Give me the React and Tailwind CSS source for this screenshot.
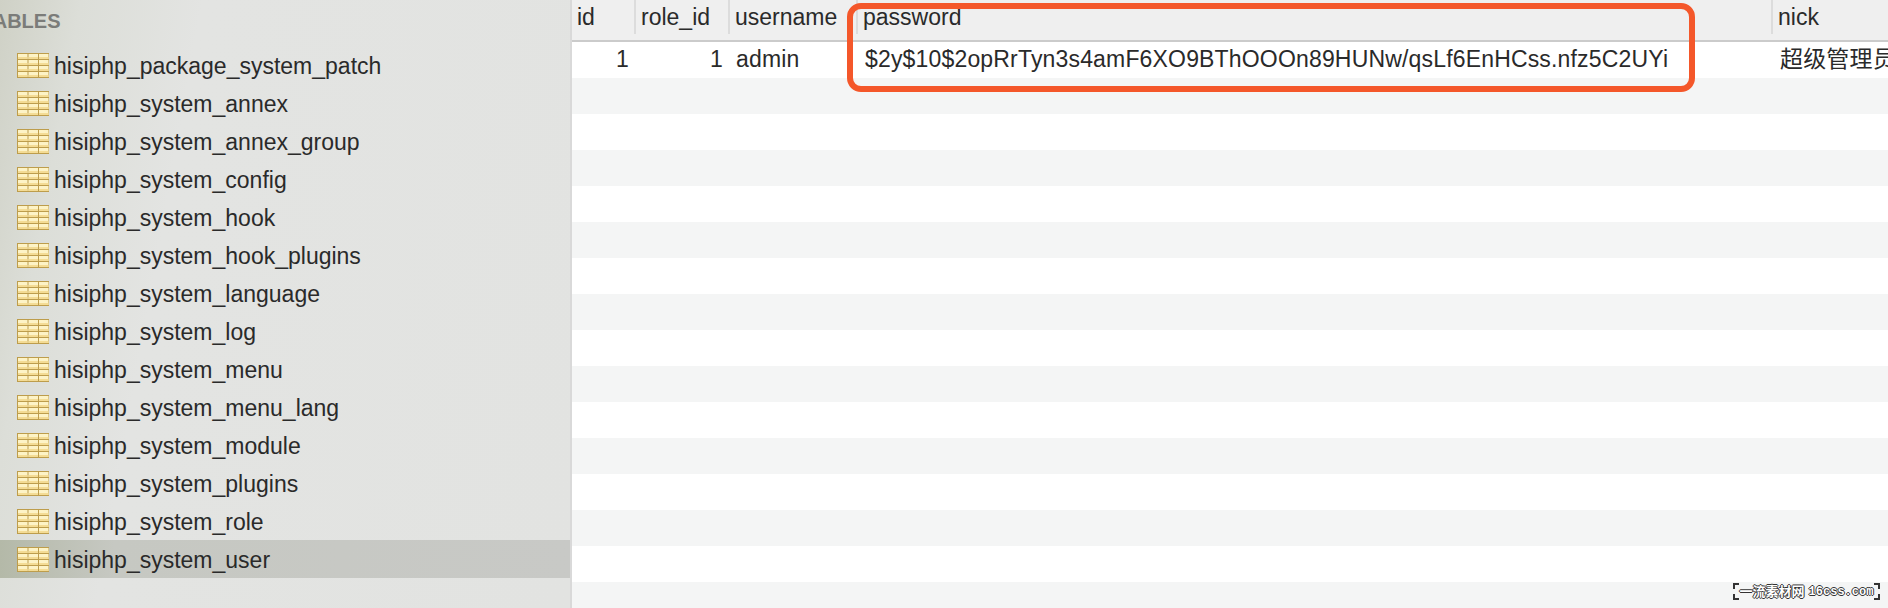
const tables = [
  'hisiphp_package_system_patch',
  'hisiphp_system_annex',
  'hisiphp_system_annex_group',
  'hisiphp_system_config',
  'hisiphp_system_hook',
  'hisiphp_system_hook_plugins',
  'hisiphp_system_language',
  'hisiphp_system_log',
  'hisiphp_system_menu',
  'hisiphp_system_menu_lang',
  'hisiphp_system_module',
  'hisiphp_system_plugins',
  'hisiphp_system_role',
  'hisiphp_system_user',
];

const columns = [
  { name: 'id', width: 'w-[64px]' },
  { name: 'role_id', width: 'w-[94px]' },
  { name: 'username', width: 'w-[128px]' },
  { name: 'password', width: 'w-[915px]' },
  { name: 'nick', width: 'flex-1' },
];

// Sequel Pro style yellow table icon: four bands, three columns
function TableIcon() {
  const bands = [1, 7, 13, 19];
  return (
    <svg width="32" height="25" viewBox="0 0 32 25" className="shrink-0">
      <rect x="0" y="0" width="32" height="25" fill="#bd9d4c" />
      {bands.map(y => (
        <g key={y}>
          {[1, 11.5, 22].map(x => (
            <g key={x}>
              <rect x={x} y={y} width="9.5" height="5" fill="#fdf3c6" />
              <rect x={x} y={y + 3} width="9.5" height="2" fill="#f4dc95" />
            </g>
          ))}
        </g>
      ))}
    </svg>
  );
}

export default function App() {
  return (
    <div className="relative flex h-[608px] w-[1888px] overflow-hidden bg-white font-['Liberation_Sans','Noto_Sans_CJK_SC',sans-serif] text-[#2a2a2a]">
      {/* Sidebar */}
      <div className="w-[570px] shrink-0 bg-[linear-gradient(100deg,#cfd1c6_0%,#dcded8_12%,#e3e4e2_30%,#e2e3e1_100%)]">
        <div className="h-[46px] overflow-hidden pt-[8px]">
          <div className="ml-[-18px] text-[20px] font-bold leading-[26px] text-[#7b7c79]">TABLES</div>
        </div>
        {tables.map(name => (
          <div
            key={name}
            className={`flex h-[38px] items-center gap-[5px] pl-[17px] text-[23px] ${
              name === 'hisiphp_system_user' ? 'bg-[linear-gradient(90deg,#b4b9a8_0%,#c6c8c2_20%,#c8c9c6_100%)]' : ''
            }`}
          >
            <TableIcon />
            <span className="pt-[2px]">{name}</span>
          </div>
        ))}
      </div>
      <div className="w-[2px] shrink-0 bg-[#d9d9d9]" />

      {/* Data table */}
      <div className="flex min-w-0 flex-1 flex-col">
        <div className="flex h-[42px] shrink-0 border-b-2 border-[#cbcbcb] bg-[#efefef] text-[23px]">
          {columns.map((col, i) => (
            <div key={col.name} className={`${col.width} flex h-[34px] shrink-0 items-center pl-[5px] ${i < 4 ? 'border-r-2 border-[#dcdcdc]' : ''}`}>
              {col.name}
            </div>
          ))}
        </div>
        <div className="flex h-[36px] shrink-0 items-center pb-[2px] text-[23px] tracking-[0.17px]">
          <div className="w-[64px] shrink-0 pr-[7px] text-right">1</div>
          <div className="w-[94px] shrink-0 pr-[7px] text-right">1</div>
          <div className="w-[128px] shrink-0 pl-[6px]">admin</div>
          <div className="w-[915px] shrink-0 pl-[7px]">$2y$10$2opRrTyn3s4amF6XO9BThOOOn89HUNw/qsLf6EnHCss.nfz5C2UYi</div>
          <div className="flex-1 whitespace-nowrap pl-[7px]">超级管理员</div>
        </div>
        {Array.from({ length: 15 }).map((_, i) => (
          <div key={i} className={`h-[36px] shrink-0 ${i % 2 === 0 ? 'bg-[#f4f5f5]' : 'bg-white'}`} />
        ))}
      </div>

      {/* Red annotation */}
      <div className="absolute left-[847px] top-[3px] h-[89px] w-[848px] rounded-[14px] border-[6px] border-[#f4572a]" />

      {/* Watermark */}
      <div className="absolute left-[1733px] top-[583px] flex h-[17px] w-[147px] items-center justify-center gap-[4px] whitespace-nowrap text-[13px] font-bold leading-none text-white [text-shadow:1px_0_0_#333,-1px_0_0_#333,0_1px_0_#333,0_-1px_0_#333]">
        <span className="absolute left-0 top-0 h-[6px] w-[6px] border-l-2 border-t-2 border-[#333]" />
        <span className="absolute bottom-0 left-0 h-[6px] w-[6px] border-b-2 border-l-2 border-[#333]" />
        <span className="absolute right-0 top-0 h-[6px] w-[6px] border-r-2 border-t-2 border-[#333]" />
        <span className="absolute bottom-0 right-0 h-[6px] w-[6px] border-b-2 border-r-2 border-[#333]" />
        <span>一流素材网</span>
        <span className="font-['Liberation_Mono',monospace] text-[12px]">16css.com</span>
      </div>
    </div>
  );
}
